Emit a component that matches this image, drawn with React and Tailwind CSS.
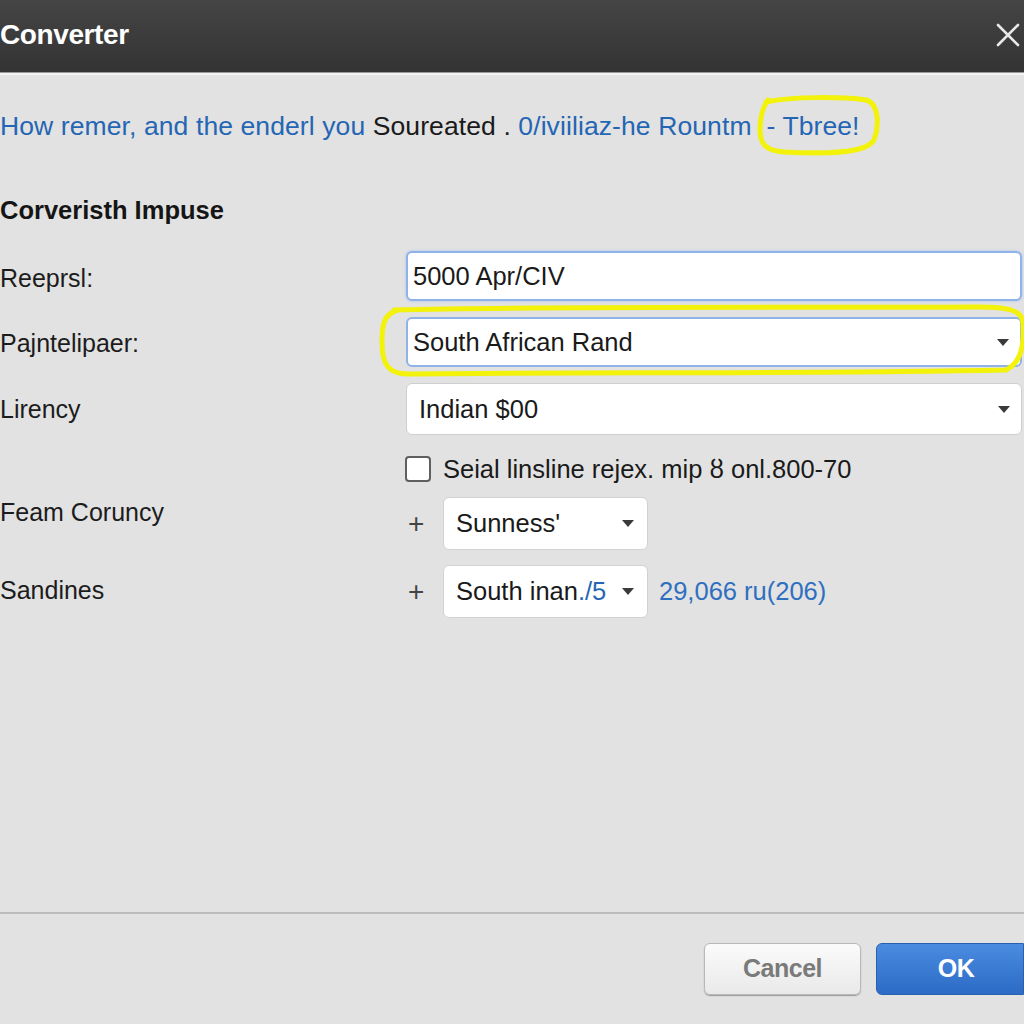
import React from "react";

const font = { fontFamily: '"Liberation Sans", Arial, sans-serif' };

const Caret = () => (
  <svg width="14" height="9" viewBox="0 0 14 9" className="shrink-0">
    <path d="M1 1 L13 1 L7 8 Z" fill="#3a3a3a" />
  </svg>
);

const SelectBox = ({ children, className = "" }) => (
  <div className={"flex items-center justify-between bg-white rounded-md pl-[12px] pr-[10px] " + className}>
    <span className="whitespace-nowrap">{children}</span>
    <Caret />
  </div>
);

const FieldLabel = ({ children, className = "" }) => (
  <div className={"w-[406px] shrink-0 text-[25px] text-[#1c1c1c] " + className}>{children}</div>
);

const Converter = () => {
  return (
    <div className="w-[1024px] h-[1024px] bg-[#e2e2e2] overflow-hidden flex flex-col" style={font}>
      {/* title bar */}
      <div className="h-[72px] shrink-0 bg-gradient-to-b from-[#454545] to-[#333333] flex items-center justify-between">
        <div className="text-white font-bold text-[28px] tracking-[-0.4px] mt-[-2px]">Converter</div>
        <svg width="24" height="24" viewBox="0 0 24 24" className="mr-[4px] mt-[-2px]">
          <path d="M2 2 L22 22 M22 2 L2 22" stroke="#e8e8e8" strokeWidth="2.6" strokeLinecap="round" />
        </svg>
      </div>
      <div className="h-[3px] bg-[#f2f2f2] border-t border-[#9a9a9a]" />

      {/* intro line */}
      <div className="relative h-[104px] flex items-center text-[26.5px] whitespace-nowrap tracking-[0.1px]">
        <span className="text-[#2566b4]">How remer, and the enderl you&nbsp;</span>
        <span className="text-[#1a1a1a]">Soureated .&nbsp;</span>
        <span className="text-[#2566b4]">0/iviiliaz-he Rountm&nbsp;&nbsp;- Tbree!</span>
        <svg width="130" height="66" viewBox="0 0 130 66" className="absolute left-[754px] top-[19px]">
          <path
            d="M12 8 C40 2 90 3 112 6 C124 9 126 30 120 46 C112 60 70 60 30 58 C12 57 6 50 6 36 C6 24 8 14 14 6"
            fill="none"
            stroke="#f2f20a"
            strokeWidth="5"
            strokeLinecap="round"
          />
        </svg>
      </div>

      {/* section heading */}
      <div className="h-[62px] flex items-center font-bold text-[25.5px] text-[#151515] mt-[0px]">Corveristh Impuse</div>

      {/* form */}
      <div className="flex flex-col mt-[10px]">
        <div className="flex items-center h-[50px]">
          <FieldLabel className="mt-[6px]">Reeprsl:</FieldLabel>
          <div className="flex-1 h-[50px] mr-[2px] bg-white rounded-md border-2 border-[#8fb2e8] flex items-center pl-[5px] text-[25.5px] text-[#1a1a1a] shadow-[0_0_3px_#a9c4ee]">
            5000 Apr/CIV
          </div>
        </div>

        <div className="relative flex items-center h-[50px] mt-[16px]">
          <FieldLabel className="mt-[4px]">Pajntelipaer:</FieldLabel>
          <SelectBox className="flex-1 h-[50px] mr-[2px] border-2 border-[#8fb2e8] text-[25.5px] text-[#1a1a1a] !pl-[5px]">
            South African Rand
          </SelectBox>
          <svg width="648" height="76" viewBox="0 0 648 76" className="absolute left-[378px] top-[-13px]">
            <path
              d="M16 6 C200 2 420 4 600 3 C630 3 645 6 645 20 C646 40 644 58 628 66 C420 70 200 68 30 70 C10 70 4 60 4 38 C4 20 6 10 20 6"
              fill="none"
              stroke="#f2f20a"
              strokeWidth="5"
              strokeLinecap="round"
            />
          </svg>
        </div>

        <div className="flex items-center h-[52px] mt-[16px]">
          <FieldLabel className="mt-[2px]">Lirency</FieldLabel>
          <SelectBox className="flex-1 h-[52px] mr-[2px] border border-[#cfcfcf] text-[25.5px] text-[#1a1a1a]">
            Indian $00
          </SelectBox>
        </div>

        <div className="flex items-center h-[32px] mt-[18px]">
          <div className="w-[405px] shrink-0" />
          <div className="w-[26px] h-[26px] rounded-[4px] border-2 border-[#5f5f5f] bg-white shrink-0" />
          <span className="ml-[12px] text-[25.5px] text-[#1a1a1a] whitespace-nowrap">Seial linsline rejex. mip ȣ onl.800-70</span>
        </div>

        <div className="flex items-start mt-[12px]">
          <FieldLabel className="-mt-[3px]">Feam Coruncy</FieldLabel>
          <div className="flex items-center h-[53px]">
            <span className="w-[37px] text-[28px] text-[#444] font-light leading-none pl-[2px]">+</span>
            <SelectBox className="w-[205px] h-[53px] border border-[#d2d2d2] text-[25.5px] text-[#1a1a1a] !pr-[12px]">
              Sunness'
            </SelectBox>
          </div>
        </div>

        <div className="flex items-center mt-[15px]">
          <FieldLabel className="-mt-[2px]">Sandines</FieldLabel>
          <div className="flex items-center h-[53px]">
            <span className="w-[37px] text-[28px] text-[#444] font-light leading-none pl-[2px]">+</span>
            <SelectBox className="w-[205px] h-[53px] border border-[#d2d2d2] text-[25.5px] text-[#1a1a1a] !pr-[12px]">
              South inan<span className="text-[#2566b4]">./5</span>
            </SelectBox>
            <span className="ml-[11px] text-[25.5px] text-[#2f6fc0] whitespace-nowrap">29,066 ru(206)</span>
          </div>
        </div>
      </div>

      <div className="flex-1" />

      {/* footer */}
      <div className="h-[2px] bg-[#bcbcbc]" />
      <div className="h-[110px] flex justify-end items-start pt-[29px]">
        <button className="w-[157px] h-[52px] rounded-[6px] border border-[#b8b8b8] bg-gradient-to-b from-[#fbfbfb] to-[#e9e9e9] text-[#7a7a7a] font-bold text-[25px] tracking-[-0.5px] shadow-[0_1px_1px_#9a9a9a]">
          Cancel
        </button>
        <button className="ml-[15px] w-[148px] h-[52px] rounded-l-[6px] border border-[#2a60b0] bg-gradient-to-b from-[#4a8ce0] to-[#2c6bc6] text-white font-bold text-[25px] tracking-[-0.5px]">
          <span className="ml-[12px]">OK</span>
        </button>
      </div>
    </div>
  );
};

export default function App() {
  return <Converter />;
}
